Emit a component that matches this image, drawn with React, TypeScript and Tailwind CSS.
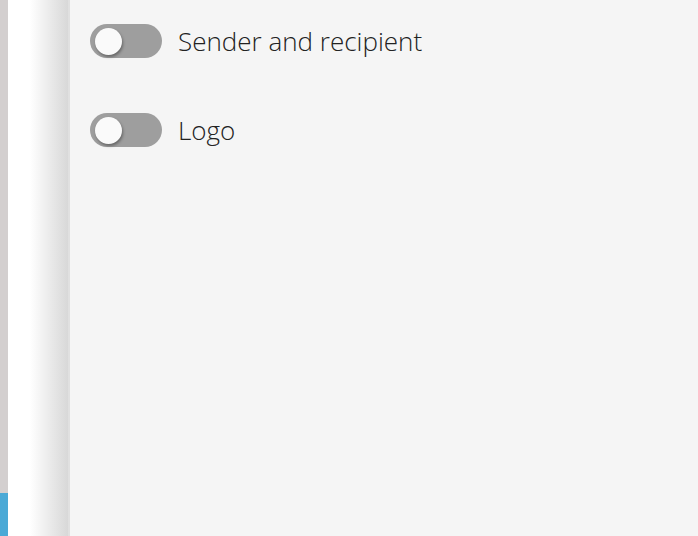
import React from "react";

const Toggle = ({ label }: { label: string }) => {
  return (
    <div className="flex items-center h-[34px]">
      <div className="relative w-[72px] h-[34px] rounded-full bg-[#9e9e9e] shrink-0">
        <div className="absolute left-[5px] top-[3.5px] w-[27px] h-[27px] rounded-full bg-[#fafafa] shadow-[1px_2px_3px_rgba(0,0,0,0.35)]"></div>
      </div>
      <span className="ml-4 text-[26px] font-light text-[#222] leading-none">{label}</span>
    </div>
  );
};

const App = () => {
  return (
    <div className="flex w-[698px] h-[536px] overflow-hidden" style={{ fontFamily: '"Open Sans", sans-serif' }}>
      {/* left strip */}
      <div className="flex flex-col w-[8px] h-full">
        <div className="flex-1 bg-[#d3cfcf]"></div>
        <div className="h-[43px] bg-[#4aa9d6]"></div>
      </div>
      {/* white gap with shadow */}
      <div className="flex w-[62px] h-full bg-white">
        <div className="w-[22px]"></div>
        <div className="flex-1 bg-gradient-to-r from-white to-[#d8d8d8]"></div>
        <div className="w-[2px] bg-[#e0e0e0]"></div>
      </div>
      {/* panel */}
      <div className="flex-1 h-full bg-[#f5f5f5] pl-[20px] pt-[24px] flex flex-col gap-[55px]">
        <Toggle label="Sender and recipient" />
        <Toggle label="Logo" />
      </div>
    </div>
  );
};

export default App;
